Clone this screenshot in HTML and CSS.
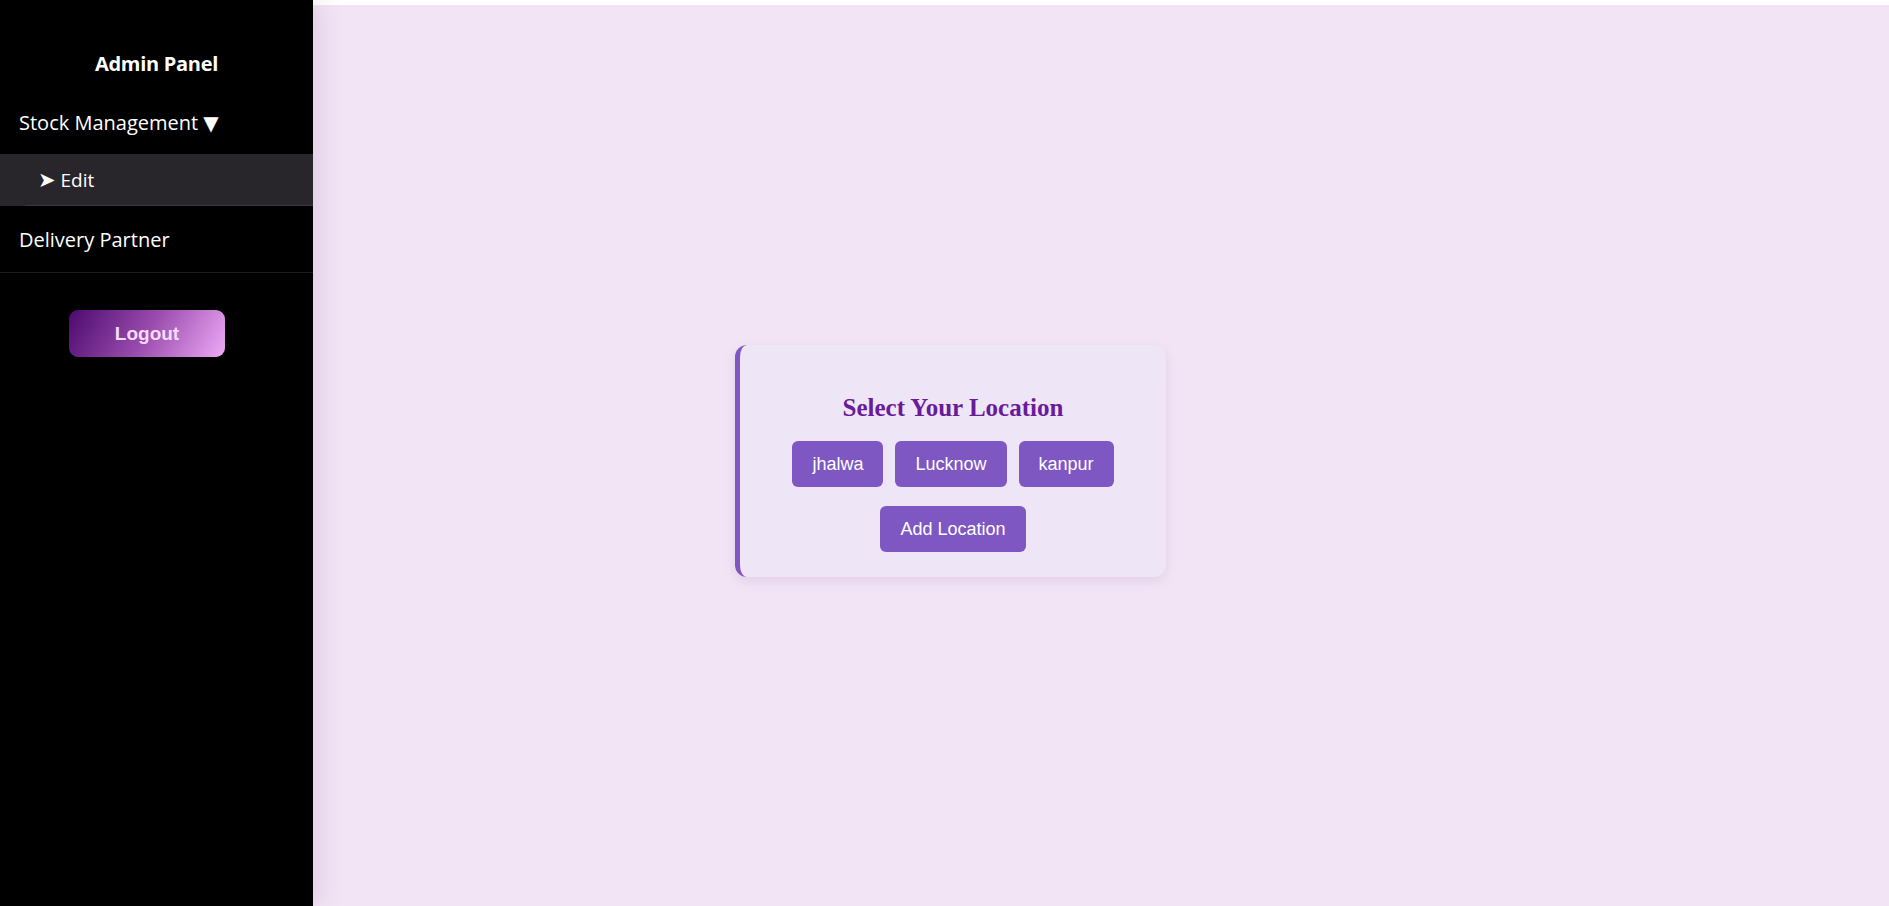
FILE: index.html
```html
<!DOCTYPE html>
<html lang="en">
<head>
<meta charset="utf-8">
<title>Admin Panel</title>
<link rel="stylesheet" href="styles.css">
</head>
<body>
<div class="layout">
  <aside class="sidebar">
    <div class="brand">Admin Panel</div>
    <div class="menu-item menu-toggle">Stock Management <span class="caret">▼</span></div>
    <div class="submenu">
      <div class="submenu-item"><span class="arrow">➤</span> Edit</div>
    </div>
    <div class="menu-item menu-link">Delivery Partner</div>
    <div class="logout-wrap">
      <button class="logout">Logout</button>
    </div>
  </aside>
  <main class="main">
    <section class="card">
      <h2 class="card-title">Select Your Location</h2>
      <div class="btn-row">
        <button class="loc-btn">jhalwa</button>
        <button class="loc-btn">Lucknow</button>
        <button class="loc-btn">kanpur</button>
      </div>
      <div class="btn-row">
        <button class="loc-btn">Add Location</button>
      </div>
    </section>
  </main>
</div>
</body>
</html>
```

FILE: styles.css
```css
* { box-sizing: border-box; }
html, body { margin: 0; padding: 0; }
body {
  background: #ffffff;
  font-family: "Open Sans", "Noto Sans", sans-serif;
}
.layout {
  display: flex;
  height: 100vh;
  overflow: hidden;
}
.sidebar {
  position: relative;
  z-index: 2;
  flex: 0 0 313px;
  width: 313px;
  height: 100vh;
  background: #000000;
  color: #ffffff;
  padding-top: 50px;
  box-shadow: 4px 0 28px rgba(60, 20, 70, 0.12);
}
.brand {
  font-size: 20px;
  font-weight: 700;
  line-height: 28px;
  letter-spacing: -0.3px;
  text-align: center;
  margin-bottom: 32px;
}
.menu-item {
  font-size: 20px;
  line-height: 26px;
  padding: 0 19px;
}
.caret {
  font-family: "DejaVu Sans", sans-serif;
  font-size: 20px;
}
.menu-toggle {
  padding-bottom: 18px;
}
.submenu {
  background: #28252b;
}
.submenu-item {
  margin-left: 25px;
  padding-left: 13px;
  font-size: 19px;
  height: 52px;
  line-height: 53px;
  border-bottom: 1px solid #3a383c;
}
.arrow {
  font-family: "DejaVu Sans", sans-serif;
  font-size: 21px;
}
.menu-link {
  padding-top: 21px;
  padding-bottom: 19px;
  border-bottom: 1px solid #1c1c1c;
}
.logout-wrap {
  padding: 37px 0 0 69px;
}
.logout {
  width: 156px;
  height: 47px;
  border: none;
  border-radius: 9px;
  background: linear-gradient(120deg, #4c0a6e 0%, #9a4cae 50%, #eeaaf6 100%);
  color: #f4dcf8;
  font-family: "Liberation Sans", Arial, sans-serif;
  font-size: 19px;
  font-weight: 700;
  cursor: pointer;
}
.main {
  flex: 1;
  margin-top: 5px;
  background: #f2e4f5;
  padding: 340px 0 0 422px;
}
.card {
  width: 431px;
  height: 232px;
  background: #eee6f6;
  border-left: 5px solid #7e57c2;
  border-radius: 12px;
  box-shadow: 0 4px 12px rgba(120, 60, 140, 0.12);
  padding: 28px 20px 25px;
  text-align: center;
}
.card-title {
  font-family: "Liberation Serif", "Times New Roman", serif;
  font-size: 25px;
  font-weight: 700;
  color: #6a1b9a;
  margin: 21px 0 19px;
  line-height: 28px;
}
.btn-row {
  display: flex;
  justify-content: center;
  gap: 12px;
  margin-bottom: 19px;
}
.loc-btn {
  background: #7e57c2;
  color: #ffffff;
  border: none;
  border-radius: 6px;
  padding: 12px 20px;
  height: 46px;
  font-family: "Liberation Sans", Arial, sans-serif;
  font-size: 18px;
  line-height: 22px;
  cursor: pointer;
}
```
